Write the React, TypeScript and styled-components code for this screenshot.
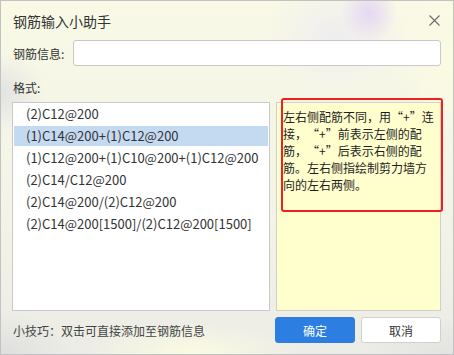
import React from 'react';
import styled, { createGlobalStyle } from 'styled-components';

const Global = createGlobalStyle`
  html, body { margin: 0; padding: 0; }
  body {
    width: 454px;
    height: 355px;
    overflow: hidden;
    font-family: "Noto Sans CJK SC", "Noto Sans", sans-serif;
    -webkit-font-smoothing: antialiased;
  }
`;

const Dialog = styled.div`
  box-sizing: border-box;
  width: 454px;
  height: 355px;
  border: 1px solid #c2c2c2;
  padding: 0 12px 11px 11px;
  display: flex;
  flex-direction: column;
  color: #333;
  background:
    radial-gradient(ellipse 28px 30px at 368px 12px, rgba(228, 214, 244, 0.95), rgba(228, 214, 244, 0) 100%),
    radial-gradient(ellipse 70px 60px at 335px 35px, rgba(238, 236, 240, 0.9), rgba(238, 236, 240, 0) 100%),
    radial-gradient(ellipse 45px 40px at 0px 92px, rgba(226, 226, 226, 1), rgba(226, 226, 226, 0) 100%),
    radial-gradient(ellipse 70px 45px at 0px 355px, rgba(222, 222, 222, 1), rgba(222, 222, 222, 0) 100%),
    radial-gradient(ellipse 90px 40px at 454px 355px, rgba(226, 226, 224, 1), rgba(226, 226, 224, 0) 100%),
    radial-gradient(ellipse 110px 30px at 190px 352px, rgba(251, 251, 226, 1), rgba(251, 251, 226, 0) 100%),
    radial-gradient(ellipse 60px 80px at 454px 60px, rgba(251, 251, 226, 1), rgba(251, 251, 226, 0) 100%),
    linear-gradient(180deg, #f9f9e6 0%, #f3f3e8 60%, #ececE6 100%);
`;

const TitleBar = styled.div`
  height: 39px;
  display: flex;
  align-items: center;
  justify-content: space-between;
`;

const Title = styled.div`
  font-size: 14px;
  color: #333;
  padding-left: 1px;
`;

const CloseIcon = styled.svg`
  width: 11px;
  height: 11px;
  margin-right: 1px;
  margin-top: -1px;
`;

const FieldRow = styled.div`
  display: flex;
  align-items: center;
  height: 26px;
`;

const Label = styled.div<{ $w?: number }>`
  font-size: 12px;
  color: #333;
  width: ${(p) => (p.$w ? `${p.$w}px` : 'auto')};
  flex-shrink: 0;
  padding-left: 1px;
  box-sizing: border-box;
`;

const Input = styled.div`
  flex: 1;
  height: 26px;
  box-sizing: border-box;
  border: 1px solid #c8c8c8;
  border-radius: 3px;
  background: #fff;
`;

const SectionLabel = styled(Label)`
  line-height: 20px;
  margin: 12px 0 4px;
`;

const Content = styled.div`
  display: flex;
  gap: 6px;
  height: 209px;
`;

const List = styled.div`
  width: 258px;
  box-sizing: border-box;
  border: 1px solid #c9c9c9;
  background: #fff;
  padding: 1px;
  display: flex;
  flex-direction: column;
  gap: 2px;
`;

const Item = styled.div<{ $selected?: boolean }>`
  height: 20px;
  line-height: 20px;
  padding-left: 12px;
  font-size: 13px;
  color: #333;
  white-space: nowrap;
  background: ${(p) => (p.$selected ? '#c4daf0' : 'transparent')};
`;

const Panel = styled.div`
  position: relative;
  flex: 1;
  box-sizing: border-box;
  border: 1px solid #cfcfcf;
  background: #ffffce;
  padding: 5px 4px 0 6px;
  font-size: 12px;
  line-height: 17px;
  color: #1e1e1e;
  white-space: nowrap;
`;

const Quote = styled.span<{ $open?: boolean }>`
  display: inline-block;
  width: 12px;
  text-align: ${(p) => (p.$open ? 'right' : 'left')};
`;

const Highlight = styled.div`
  position: absolute;
  left: 4px;
  top: -5px;
  width: 162px;
  height: 114px;
  box-sizing: border-box;
  border: 2px solid #ee2020;
  border-radius: 3px;
  pointer-events: none;
`;

const Footer = styled.div`
  display: flex;
  align-items: center;
  gap: 6px;
  margin-top: 6px;
  height: 26px;
`;

const Tip = styled.div`
  flex: 1;
  font-size: 12px;
  color: #444;
  padding-left: 1px;
`;

const Button = styled.div<{ $primary?: boolean }>`
  width: 80px;
  height: 26px;
  box-sizing: border-box;
  border-radius: 3px;
  display: flex;
  align-items: center;
  justify-content: center;
  font-size: 12px;
  background: ${(p) => (p.$primary ? '#2c7fe0' : '#fff')};
  color: ${(p) => (p.$primary ? '#fff' : '#333')};
  border: 1px solid ${(p) => (p.$primary ? '#2c7fe0' : '#d0d0d0')};
`;

const items = [
  '(2)C12@200',
  '(1)C14@200+(1)C12@200',
  '(1)C12@200+(1)C10@200+(1)C12@200',
  '(2)C14/C12@200',
  '(2)C14@200/(2)C12@200',
  '(2)C14@200[1500]/(2)C12@200[1500]',
];

const Plus = () => (
  <>
    <Quote $open>“</Quote>+<Quote>”</Quote>
  </>
);

export default function App() {
  return (
    <>
      <Global />
      <Dialog>
        <TitleBar>
          <Title>钢筋输入小助手</Title>
          <CloseIcon viewBox="0 0 11 11">
            <path d="M0.5 0.5 L10.5 10.5 M10.5 0.5 L0.5 10.5" stroke="#6a6a6a" strokeWidth="1.1" fill="none" />
          </CloseIcon>
        </TitleBar>
        <FieldRow>
          <Label $w={61}>钢筋信息:</Label>
          <Input />
        </FieldRow>
        <SectionLabel>格式:</SectionLabel>
        <Content>
          <List>
            {items.map((t, i) => (
              <Item key={t} $selected={i === 1}>
                {t}
              </Item>
            ))}
          </List>
          <Panel lang="zh-CN">
            <div>
              左右侧配筋不同，用<Plus />连
            </div>
            <div>
              接，<Plus />前表示左侧的配
            </div>
            <div>
              筋，<Plus />后表示右侧的配
            </div>
            <div>筋。左右侧指绘制剪力墙方</div>
            <div>向的左右两侧。</div>
            <Highlight />
          </Panel>
        </Content>
        <Footer>
          <Tip>小技巧：双击可直接添加至钢筋信息</Tip>
          <Button $primary>确定</Button>
          <Button>取消</Button>
        </Footer>
      </Dialog>
    </>
  );
}
